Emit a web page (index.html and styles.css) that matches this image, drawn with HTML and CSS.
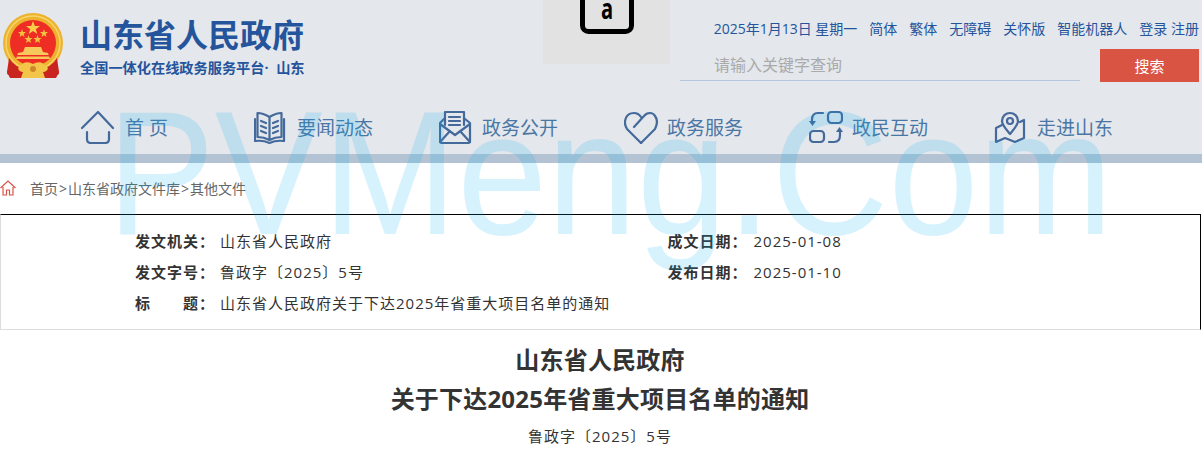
FILE: index.html
```html
<!DOCTYPE html>
<html lang="zh-CN">
<head>
    <meta charset="UTF-8">
    <meta name="viewport" content="width=device-width, initial-scale=1.0">
    <title>山东省人民政府关于下达2025年省重大项目名单的通知</title>
    <link rel="stylesheet" href="styles.css">
</head>
<body>
    <div class="watermark">PVMeng.Com</div>

    <header class="site-header">
        <div class="header-top">
            <a class="brand" href="#">
                <svg class="emblem" viewBox="0 0 64 68" width="64" height="68">
                    <path d="M9 48 L6 62 L14 66 L50 66 L58 62 L55 48 Z" fill="#c9241f"/>
                    <circle cx="32" cy="31" r="30" fill="#eeb32e"/>
                    <circle cx="32" cy="31" r="27" fill="none" stroke="#f8d568" stroke-width="1.400"/>
                    <circle cx="32" cy="31" r="23" fill="#ee2d24"/>
                    <polygon points="32,9 33.800,14 39,14 34.800,17.200 36.300,22 32,19 27.700,22 29.200,17.200 25,14 30.200,14" fill="#f9cf4a"/>
                    <polygon points="21,17 22,20 25,20 22.700,22 23.500,25 21,23.200 18.500,25 19.300,22 17,20 20,20" fill="#f2c13f"/>
                    <polygon points="43,17 44,20 47,20 44.700,22 45.500,25 43,23.200 40.500,25 41.300,22 39,20 42,20" fill="#f2c13f"/>
                    <polygon points="27.500,23 28.500,26 31.500,26 29.200,28 30,31 27.500,29.200 25,31 25.800,28 23.500,26 26.500,26" fill="#f2c13f"/>
                    <polygon points="36.500,23 37.500,26 40.500,26 38.200,28 39,31 36.500,29.200 34,31 34.800,28 32.500,26 35.500,26" fill="#f2c13f"/>
                    <path d="M24 35 L40 35 L42 40 L47 41 L49 47 L15 47 L17 41 L22 40 Z" fill="#f7c95a"/>
                    <rect x="16" y="43" width="32" height="1.500" fill="#ee2d24"/>
                    <path d="M8 46 Q14 56 24 56 L32 59 L40 56 Q50 56 56 46 L58 60 L55 66 L9 66 L6 60 Z" fill="#c9241f"/>
                    <path d="M17 56 Q24 47 32 52 Q40 47 47 56 Q46 60 42 60 L44 66 L20 66 L22 60 Q18 60 17 56 Z" fill="#f3c548"/>
                    <circle cx="32" cy="57" r="3" fill="#d0862a"/>
                </svg>
                <span class="brand-text">
                    <span class="brand-name">山东省人民政府</span>
                    <span class="brand-sub">全国一体化在线政务服务平台· 山东</span>
                </span>
            </a>

            <div class="key-tile">
                <svg viewBox="0 0 60 34" width="60" height="34">
                    <rect x="5.500" y="-20" width="49" height="51.500" rx="6" fill="none" stroke="#000" stroke-width="5"/>
                    <text class="key-letter" transform="translate(30 19) scale(0.72 1)" text-anchor="middle">a</text>
                </svg>
            </div>

            <div class="tools">
                <ul class="tool-links">
                    <li class="tool-date">2025年1月13日 星期一</li>
                    <li><a href="#">简体</a></li>
                    <li><a href="#">繁体</a></li>
                    <li><a href="#">无障碍</a></li>
                    <li><a href="#">关怀版</a></li>
                    <li><a href="#">智能机器人</a></li>
                    <li class="tool-login"><a href="#">登录</a> <a href="#">注册</a></li>
                </ul>
                <form class="search">
                    <input class="search-input" type="text" placeholder="请输入关键字查询">
                    <button class="search-btn" type="button">搜索</button>
                </form>
            </div>
        </div>

        <nav class="main-nav">
            <a class="nav-item nav-home" href="#">
                <svg class="nav-icon" viewBox="0 0 34 34" width="34" height="34">
                    <path d="M1 18 L17 2 L32 18" />
                    <path d="M6 22 V29 Q6 33 10 33 H24 Q28 33 28 29 V22" />
                </svg>
                <span>首 页</span>
            </a>
            <a class="nav-item" href="#">
                <svg class="nav-icon" viewBox="0 0 34 34" width="34" height="34">
                    <path d="M15.500 7 Q9 3 3.500 3 V27 Q10 27 15.500 30 Q21 27 27.500 27 V3 Q22 3 15.500 7 V30" />
                    <path d="M1 9 V31 Q9 30 15.500 33 Q22 30 30 31 V9" />
                    <path d="M7 11 L12 13 M7 16 L12 18 M7 21 L12 23 M24 11 L19 13 M24 16 L19 18 M24 21 L19 23" />
                </svg>
                <span>要闻动态</span>
            </a>
            <a class="nav-item" href="#">
                <svg class="nav-icon" viewBox="0 0 34 34" width="34" height="34">
                    <path d="M6 15 V2 H25 V15" />
                    <path d="M10 7 H21 M10 11 H21 M10 15 H21" />
                    <path d="M5 9 L1 13 V31 Q1 33 3 33 H29 Q31 33 31 31 V13 L26 9" />
                    <path d="M1 14 L16 25 L31 14 M1 32 L11 21 M31 32 L21 21" />
                </svg>
                <span>政务公开</span>
            </a>
            <a class="nav-item" href="#">
                <svg class="nav-icon" viewBox="0 0 34 34" width="34" height="34">
                    <path d="M17 33 L3 19 C-1 13 1 3 10 3 C13 3 15 4 17 7" />
                    <path d="M10 17 L20 6 C23 2 29 2 31 6 C34 10 33 15 31 19 L17 33" />
                </svg>
                <span>政务服务</span>
            </a>
            <a class="nav-item" href="#">
                <svg class="nav-icon" viewBox="0 0 34 34" width="34" height="34">
                    <rect x="19" y="2" width="14" height="11" rx="3.500" />
                    <rect x="1" y="21" width="14" height="11" rx="3.500" />
                    <path d="M14 3 H9 Q3 3 3 10 V13" />
                    <path class="icon-fill" d="M0 11 H7 L3.500 16 Z" />
                    <path d="M20 32 H25 Q31 32 31 25 V21" />
                    <path class="icon-fill" d="M27 22 H34 L30.500 17 Z" />
                </svg>
                <span>政民互动</span>
            </a>
            <a class="nav-item" href="#">
                <svg class="nav-icon" viewBox="0 0 34 34" width="34" height="34">
                    <path d="M16 24 C12 19 8 15 8 11 C8 6 12 3 16 3 C20 3 24 6 24 11 C24 15 20 19 16 24 Z" />
                    <circle cx="16" cy="11" r="3" />
                    <path d="M8 15 L2 18 V32 L11 28 L21 32 L30 28 V10 M26 12 L30 10" />
                </svg>
                <span>走进山东</span>
            </a>
        </nav>
        <div class="header-band"></div>
    </header>

    <div class="breadcrumb">
        <svg class="crumb-home" viewBox="0 0 16 16" width="16" height="16">
            <path d="M0.500 8 L8 1 L15.500 8 M3 7 V15 H6.500 V10 H9.500 V15 H13 V7" />
        </svg>
        <span>首页<span class="crumb-sep">&gt;</span>山东省政府文件库<span class="crumb-sep">&gt;</span>其他文件</span>
    </div>

    <section class="doc-info">
        <div class="info-row">
            <div class="info-cell"><b class="info-label">发文机关：</b><span>山东省人民政府</span></div>
            <div class="info-cell"><b class="info-label">成文日期：</b><span>2025-01-08</span></div>
        </div>
        <div class="info-row">
            <div class="info-cell"><b class="info-label">发文字号：</b><span>鲁政字〔2025〕5号</span></div>
            <div class="info-cell"><b class="info-label">发布日期：</b><span>2025-01-10</span></div>
        </div>
        <div class="info-row">
            <div class="info-cell info-wide"><b class="info-label info-label-split"><span>标</span><span>题：</span></b><span>山东省人民政府关于下达2025年省重大项目名单的通知</span></div>
        </div>
    </section>

    <article class="doc-head">
        <h1>山东省人民政府<br>关于下达2025年省重大项目名单的通知</h1>
        <p>鲁政字〔2025〕5号</p>
    </article>
</body>
</html>
```

FILE: styles.css
```css
:root {
    --head-blue: #24549b;
    --nav-blue: #44699b;
    --nav-text: #4a76a5;
    --text: #333;
}

* {
    box-sizing: border-box;
}

html, body {
    height: 465px;
    overflow: hidden;
}

body {
    margin: 0;
    background: #fff;
    color: var(--text);
    font-family: "Open Sans", "Noto Sans CJK SC", sans-serif;
    position: relative;
}

a {
    color: inherit;
    text-decoration: none;
}

/* big translucent stamp over the whole page */
.watermark {
    position: absolute;
    top: 57px;
    left: 107px;
    z-index: 10;
    font-family: "Liberation Sans", sans-serif;
    font-size: 177px;
    line-height: 232px;
    white-space: nowrap;
    color: rgba(0, 175, 243, 0.16);
    transform: scaleX(0.913);
    transform-origin: left top;
    pointer-events: none;
}

.site-header {
    background: #e4e7ec;
}

.header-top {
    display: flex;
    height: 98px;
}

.brand {
    width: 543px;
    display: flex;
    padding: 12px 0 0 1px;
    color: var(--head-blue);
}

.emblem {
    flex: none;
}

.brand-text {
    display: flex;
    flex-direction: column;
    margin-left: 15px;
}

.brand-name {
    font-size: 32px;
    font-weight: 700;
    line-height: 46px;
}

.brand-sub {
    font-size: 14.200px;
    font-weight: 700;
    line-height: 20px;
    word-spacing: 4px;
}

.key-tile {
    width: 127px;
    height: 64px;
    background: #e2e2e2;
    padding-left: 34px;
}

.key-tile svg {
    display: block;
}

.key-letter {
    font-family: "Open Sans", sans-serif;
    font-size: 28px;
    font-weight: 700;
}

.tools {
    margin-left: 10px;
    flex: 1;
    padding-right: 3px;
}

.tool-links {
    list-style: none;
    margin: 0;
    padding: 19px 0 0;
    height: 49px;
    display: flex;
    justify-content: flex-end;
    gap: 12px;
    font-size: 14px;
    line-height: 20px;
    color: var(--head-blue);
}

.search {
    display: flex;
    justify-content: space-between;
}

.search-input {
    width: 400px;
    height: 32px;
    border: 0;
    border-bottom: 1px solid #b7c5dc;
    background: none;
    padding: 0 0 0 34px;
    font-family: inherit;
    font-size: 16px;
    outline: none;
}

.search-input::placeholder {
    color: #aaa;
    opacity: 1;
}

.search-btn {
    width: 99px;
    height: 33px;
    border: 0;
    background: #da5444;
    color: #fff;
    font-family: inherit;
    font-size: 15px;
}

.main-nav {
    display: flex;
    height: 56px;
    padding: 1px 0 0 81px;
}

.nav-item {
    width: 185px;
    display: flex;
    align-items: center;
    gap: 9px;
    font-size: 19px;
    color: var(--nav-text);
}

.nav-home {
    width: 173px;
    gap: 10px;
}

.nav-icon {
    flex: none;
    fill: none;
    stroke: var(--nav-blue);
    stroke-width: 2.200;
    stroke-linecap: round;
    stroke-linejoin: round;
}

.icon-fill {
    fill: var(--nav-blue);
    stroke: none;
}

.header-band {
    height: 9px;
    background: #b3c3d3;
}

.breadcrumb {
    height: 51px;
    padding-bottom: 2px;
    display: flex;
    align-items: center;
    gap: 14px;
    font-size: 14px;
    color: #666;
}

.crumb-sep {
    margin: 0 1px;
}

.crumb-home {
    flex: none;
    fill: none;
    stroke: #d9534a;
    stroke-width: 1.200;
}

.doc-info {
    height: 116px;
    margin-right: 1px;
    padding: 11px 0 0 134px;
    border: 1px solid #ddd;
    border-top-color: #000;
    border-right-color: #000;
    font-size: 15px;
    letter-spacing: 1px;
    line-height: 31px;
}

.info-row {
    display: flex;
}

.info-cell {
    width: 537px;
    display: flex;
}

.info-wide {
    width: auto;
}

.info-label {
    width: 85px;
    flex: none;
    font-weight: 700;
}

.info-cell + .info-cell .info-label {
    width: 86px;
}

.info-label-split {
    width: 80px;
    margin-right: 5px;
    display: flex;
    justify-content: space-between;
}

.doc-head {
    padding-right: 2px;
    text-align: center;
}

.doc-head h1 {
    margin: 10px 0 0;
    font-size: 24px;
    font-weight: 700;
    letter-spacing: 0.2px;
    line-height: 39px;
}

.doc-head p {
    margin: 3px 0 0;
    font-size: 15px;
    letter-spacing: 1px;
    line-height: 31px;
}
```
